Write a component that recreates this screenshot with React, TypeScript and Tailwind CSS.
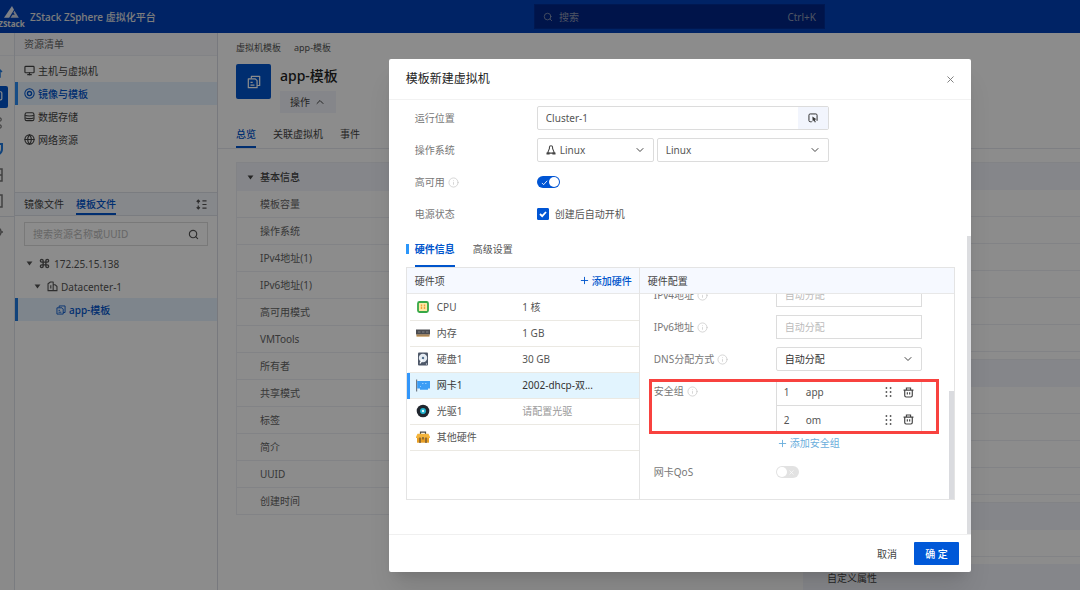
import React from 'react';
import { ChevronDown, ChevronUp, Command, Globe, Info, Monitor, Plus, Search, X } from 'lucide-react';

const CopyIcon = ({ className = '' }: { className?: string }) => (
    <svg viewBox="0 0 16 16" fill="none" stroke="currentColor" strokeWidth="1.4" strokeLinejoin="round" className={className}>
        <path d="M5 4V1.500h9.500V12H11.500" />
        <path d="M1.500 4.500h8l2 2v8h-10Z" />
        <path d="M4 8.500h2.500M4 11.500h4.500" />
    </svg>
);

const DiscIcon = () => (
    <svg viewBox="0 0 16 16" fill="none" stroke="currentColor" className="w-[11px] h-[11px]">
        <circle cx="8" cy="8" r="6.800" strokeWidth="1.500" />
        <circle cx="8" cy="8" r="3" strokeWidth="2" />
    </svg>
);

const StorageIcon = () => (
    <svg viewBox="0 0 16 16" fill="none" stroke="currentColor" strokeWidth="1.600" className="w-[11px] h-[11px]">
        <rect x="1.500" y="2.500" width="13" height="11.500" rx="2.500" />
        <path d="M1.500 6c2 1.600 11 1.600 13 0M2 10c2 1.500 10 1.500 12 0" />
    </svg>
);

const BuildingIcon = () => (
    <svg viewBox="0 0 16 16" fill="none" stroke="currentColor" strokeWidth="1.600" strokeLinejoin="round" className="w-[11px] h-[11px]">
        <path d="M1.500 14V4L5 1.500h4V14ZM9 5.500h3l2.500 2.500v6H9M5.500 6v5" />
    </svg>
);

const CaretIcon = () => (
    <svg viewBox="0 0 8 6" fill="currentColor" className="w-[7px] h-[5px] shrink-0">
        <path d="M.5.5h7L4 5.500Z" />
    </svg>
);

const SortIcon = () => (
    <svg viewBox="0 0 12 12" fill="none" stroke="currentColor" strokeWidth="1.300" className="w-[11px] h-[11px]">
        <path d="M7 2h4.500M7 6h4.500M7 10h4.500M2.500 1v4M.8 3l1.700-1.800L4.200 3M2.500 7v4M.8 9l1.700 1.800L4.200 9" />
    </svg>
);

const TuxIcon = () => (
    <svg viewBox="0 0 16 16" fill="none" stroke="currentColor" strokeWidth="1.700" className="w-[10px] h-[10px]">
        <path d="M5.500 5.500V3.500a2.500 2.300 0 0 1 5 0v2l3 7.500h-11Z" />
        <path d="M.8 13.500h5M10.200 13.500h5" strokeWidth="3" />
    </svg>
);

const PickIcon = () => (
    <svg viewBox="0 0 16 16" fill="none" stroke="currentColor" strokeWidth="1.600" className="w-[10px] h-[10px]">
        <path d="M6 14H3.500a2 2 0 0 1-2-2V3.500a2 2 0 0 1 2-2h9a2 2 0 0 1 2 2v9" />
        <path d="M7 5.500l6.500 4.500-2.700.8 1.700 3.400-1.500.8-1.700-3.400L7.500 14Z" fill="currentColor" stroke="none" />
    </svg>
);

const TrashIcon = () => (
    <svg viewBox="0 0 16 16" fill="none" stroke="currentColor" strokeWidth="1.700" className="w-[11px] h-[11px]">
        <path d="M.8 4.500h14.400M5 4V1.500h6V4M2.500 4.500v8a2 2 0 0 0 2 2h7a2 2 0 0 0 2-2v-8M6.300 7.500v3.500M9.700 7.500v3.500" />
    </svg>
);

const DragIcon = () => (
    <svg viewBox="0 0 8 12" fill="currentColor" className="w-[7px] h-[10px]">
        {[1.2, 6, 10.8].map((y) => (
            <g key={y}>
                <circle cx="1.500" cy={y} r="1.100" />
                <circle cx="6.500" cy={y} r="1.100" />
            </g>
        ))}
    </svg>
);

const CpuIcon = () => (
    <svg viewBox="0 0 14 14" className="w-[14px] h-[14px]">
        <rect x="2" y="2" width="10" height="10" rx="1.500" fill="#fde9a8" stroke="#37a847" strokeWidth="1.800" />
        <path d="M5.500 4.500v5M8.500 4.500v5" stroke="#f0a43c" strokeWidth="1.400" strokeDasharray="2 .6" />
    </svg>
);

const MemoryIcon = () => (
    <svg viewBox="0 0 14 14" className="w-[14px] h-[14px]">
        <path d="M0 3.500h14v5H0Z" fill="#4b4c50" />
        <path d="M2 5h2.500v2H2ZM6 5h2.500v2H6ZM10 5h2.500v2H10Z" fill="#66676b" />
        <path d="M.5 8.500h13v2.300H.5Z" fill="#c9a26b" />
        <path d="M.5 9h13" stroke="#77583a" strokeWidth=".8" />
    </svg>
);

const DiskIcon = () => (
    <svg viewBox="0 0 14 14" className="w-[14px] h-[14px]">
        <rect x="2" y=".5" width="10" height="13" rx="1" fill="#4d5768" />
        <circle cx="7" cy="6" r="4.200" fill="#e4ebf2" />
        <circle cx="7" cy="6" r="1.200" fill="#55718f" />
        <path d="M4 11.500l2.500-4" stroke="#fff" strokeWidth="1.400" />
        <circle cx="10.500" cy="12" r=".7" fill="#cfd6dd" />
    </svg>
);

const NicIcon = () => (
    <svg viewBox="0 0 14 14" className="w-[14px] h-[14px]">
        <path d="M.6 1.500v12" stroke="#707b88" strokeWidth="1.200" />
        <path d="M1.200 3h12.800v7.500H12v1.200H4v-1.200H1.200Z" fill="#3b9df5" />
        <path d="M6 5.500h1.500M9 5.500h1.500M4 8.500h1" stroke="#8fcbff" strokeWidth="1" />
    </svg>
);

const OpticalIcon = () => (
    <svg viewBox="0 0 14 14" className="w-[14px] h-[14px]">
        <circle cx="7" cy="7" r="6.300" fill="#20262e" />
        <circle cx="7" cy="7" r="3" fill="#1fb2cf" />
        <circle cx="7" cy="7" r="1.200" fill="#e8fbff" />
    </svg>
);

const ToolboxIcon = () => (
    <svg viewBox="0 0 14 14" className="w-[14px] h-[14px]">
        <path d="M4.500 4V2.200h5V4" fill="none" stroke="#4e4a45" strokeWidth="1.200" />
        <path d="M1.500 3.800h11L14 7v1H0V7Z" fill="#f4b43b" />
        <path d="M1 8h12v4.700H1Z" fill="#e89f25" />
        <path d="M4 7.500v5.500M10 7.500v5.500M7 7v2.500" stroke="#5a4a36" strokeWidth="1.200" />
    </svg>
);

const LogoIcon = () => (
    <svg viewBox="0 0 18 16" className="w-[17px] h-[15px]">
        <path d="M1 13.500L9.500 1l2.200 4-5.200 8.500Z" fill="#e8ecf5" />
        <path d="M12.200 6l4.600 7.500H8l2-3.200h2.500l-1.500-2.400Z" fill="#cfd6e6" />
    </svg>
);

const navItems = [
    { label: '主机与虚拟机', icon: <Monitor size={11} strokeWidth={2.5} /> },
    { label: '镜像与模板', icon: <DiscIcon />, active: true },
    { label: '数据存储', icon: <StorageIcon /> },
    { label: '网络资源', icon: <Globe size={11} strokeWidth={2.5} /> },
];

const infoRows = ['模板容量', '操作系统', 'IPv4地址(1)', 'IPv6地址(1)', '高可用模式', 'VMTools', '所有者', '共享模式', '标签', '简介', 'UUID', '创建时间'];

const hardware = [
    { name: 'CPU', value: '1 核', icon: <CpuIcon /> },
    { name: '内存', value: '1 GB', icon: <MemoryIcon /> },
    { name: '硬盘1', value: '30 GB', icon: <DiskIcon /> },
    { name: '网卡1', value: '2002-dhcp-双...', icon: <NicIcon />, active: true },
    { name: '光驱1', value: '请配置光驱', icon: <OpticalIcon />, muted: true },
    { name: '其他硬件', value: '', icon: <ToolboxIcon /> },
];

const Hint = () => <Info size={11} strokeWidth={1.5} className="text-[#c4c4c4]" />;

const SelectBox = ({ id, label, value, icon, className = '' }: { id: string; label: string; value: string; icon?: React.ReactNode; className?: string }) => (
    <div className={`relative flex items-center h-6 border border-[#dcdcdc] rounded-xs ${className}`}>
        {icon && <span className="pl-2 text-[#444]">{icon}</span>}
        <select id={id} aria-label={label} className={`appearance-none bg-transparent h-full w-full outline-none ${icon ? 'pl-1' : 'pl-2'}`}>
            <option>{value}</option>
        </select>
        <ChevronDown size={12} className="absolute right-[7px] pointer-events-none text-[#444]" />
    </div>
);

const BlankCard = ({ rows }: { rows: number }) => (
    <div className="border-t border-l border-[#edeff4]">
        <div className="h-[27px] bg-[#f3f5fb]"></div>
        {Array.from({ length: rows }).map((_, idx) => (
            <div key={idx} className="h-[27px] border-b border-[#edeff4]"></div>
        ))}
    </div>
);

function TopBar() {
    return (
        <header className="flex items-center h-[33px] shrink-0 bg-[#0041b8] text-[#e4e4e4] overflow-hidden">
            <div className="w-[30px] shrink-0 flex flex-col items-center pr-[7px]">
                <LogoIcon />
                <span className="text-[8px] leading-[8px] font-bold">ZStack</span>
            </div>
            <span className="w-[504px] shrink-0 font-medium">ZStack ZSphere 虚拟化平台</span>
            <label className="flex items-center w-[291px] h-[25px] px-2 bg-[#002587] border border-[#002c94]">
                <Search size={10} className="text-[#8f9ab5]" />
                <input aria-label="搜索" placeholder="搜索" className="flex-1 min-w-0 pl-[6px] bg-transparent outline-none placeholder:text-[#8f9ab5]" />
                <kbd className="font-[inherit] text-[#8f9ab5]">Ctrl+K</kbd>
            </label>
        </header>
    );
}

function Rail() {
    const railIcon = 'flex justify-end h-[14px] shrink-0';
    return (
        <nav className="w-[15px] shrink-0 overflow-hidden border-r border-[#dfe2ea] bg-[#fbfbfc] text-[#777]">
            <div className="h-[23px] border-b border-[#edeff4]"></div>
            <div className="flex flex-col gap-3 pt-2 pr-[11px]">
                <div className={`${railIcon} text-[#1f7ae0]`}><svg viewBox="0 0 14 14" fill="none" stroke="currentColor" strokeWidth="1.500" className="w-[14px] shrink-0"><path d="M1 8l6-6 6 6M11 7v6H3V7" /></svg></div>
                <div className="flex justify-end items-center h-[22px] -my-1 -mr-[5px] pr-[5px] bg-[#0055cc] text-white rounded-r-xs"><Monitor size={14} className="shrink-0" /></div>
                <div className={railIcon}><Command size={14} className="shrink-0" /></div>
                <div className={`${railIcon} text-[#1f7ae0]`}><svg viewBox="0 0 14 14" fill="none" stroke="currentColor" strokeWidth="2" className="w-[14px] shrink-0"><path d="M2 2h11v5c0 3-2 5-5 6-4-1-6-3-6-6Z" /></svg></div>
                <div className={railIcon}><svg viewBox="0 0 14 14" fill="none" stroke="currentColor" strokeWidth="1.500" className="w-[14px] shrink-0"><path d="M1 1h12v12H1ZM1 7h12" /></svg></div>
                <div className={railIcon}><svg viewBox="0 0 14 14" fill="none" stroke="currentColor" strokeWidth="1.500" className="w-[14px] shrink-0"><path d="M1 1h12v12H1Z" /></svg></div>
            </div>
            <div className="border-t border-[#dfe2ea] mt-2 pt-2 pr-[11px]">
                <div className={railIcon}><svg viewBox="0 0 14 14" fill="none" stroke="currentColor" strokeWidth="1.500" className="w-[14px] shrink-0"><circle cx="7" cy="7" r="5" /><circle cx="7" cy="7" r="1.500" /><path d="M12 7h2" /></svg></div>
            </div>
        </nav>
    );
}

function Sidebar() {
    return (
        <aside className="w-[203px] shrink-0 flex flex-col border-r border-[#dadde5]">
            <h2 className="h-[23px] flex items-center pl-[9px] bg-[#f7f8fc] border-b border-[#edeff4] text-[#666]">资源清单</h2>
            <ul className="h-[136px] pt-[3px]">
                {navItems.map((item) => (
                    <li key={item.label}>
                        <a href="#" className={`flex items-center gap-[3px] h-[23px] border-l-3 pl-[6px] ${item.active ? 'bg-[#e6f2ff] border-[#2b8cf5] text-[#0055cc] font-medium' : 'border-transparent text-[#444]'}`}>
                            {item.icon}
                            {item.label}
                        </a>
                    </li>
                ))}
            </ul>
            <div className="flex h-[24px] border-y border-[#dfe2ea] bg-[#f5f7fd] pl-[9px] pr-[10px] gap-3 items-stretch">
                <button className="text-[#444]">镜像文件</button>
                <button className="text-[#0055cc] font-medium border-b-2 border-[#0055cc] pt-[2px]">模板文件</button>
                <button aria-label="排序" className="ml-auto text-[#555]"><SortIcon /></button>
            </div>
            <label className="mt-[6px] mx-[9px] h-6 border border-[#dcdcdc] flex items-center px-2">
                <input aria-label="搜索资源" placeholder="搜索资源名称或UUID" className="flex-1 min-w-0 outline-none bg-transparent placeholder:text-[#bbb]" />
                <Search size={11} strokeWidth={2.5} className="text-[#555]" />
            </label>
            <ul className="mt-[6px] text-[#555]">
                <li className="flex items-center h-[23px] pl-[11px] gap-[6px]">
                    <CaretIcon /><span className="flex items-center gap-1"><Command size={11} strokeWidth={3} />172.25.15.138</span>
                </li>
                <li className="flex items-center h-[23px] pl-[19px] gap-[6px]">
                    <CaretIcon /><span className="flex items-center gap-[3px]"><BuildingIcon />Datacenter-1</span>
                </li>
                <li className="flex items-center h-[23px] pl-[38px] gap-[3px] border-l-3 border-[#1f7ae0] bg-[#e6f2ff] text-[#0055cc] font-medium">
                    <CopyIcon className="w-[10px] h-[10px]" />app-模板
                </li>
            </ul>
        </aside>
    );
}

function Overview() {
    return (
        <main className="flex-1 min-w-0 pl-[18px] text-[#555]">
            <div className="flex gap-[13px] pt-[8px] h-[31px] text-[9px] leading-[14px]">
                <a href="#">虚拟机模板</a>
                <span>app-模板</span>
            </div>
            <div className="flex gap-[9px] h-[58px]">
                <div className="w-[35px] h-[35px] rounded-xs bg-[#0055cc] text-white flex items-center justify-center"><CopyIcon className="w-[14px] h-[14px]" /></div>
                <div className="flex flex-col items-start">
                    <h1 className="text-[14px] leading-[24px] font-medium text-[#222]">app-模板</h1>
                    <button className="mt-[3px] h-[22px] px-[10px] flex items-center gap-1 bg-[#f3f5fb] text-[#444]">操作 <ChevronUp size={12} /></button>
                </div>
            </div>
            <div className="flex gap-[17px] h-[27px] border-b border-[#e6e8ee] -ml-[18px] pl-[18px] text-[#444]">
                <button className="text-[#0055cc] font-medium border-b-2 border-[#0055cc]">总览</button>
                <button className="pb-[2px]">关联虚拟机</button>
                <button className="pb-[2px]">事件</button>
            </div>
            <div className="grid grid-cols-[1fr_277px] gap-[6px] mt-[13px] items-start">
                <section className="border-l border-t border-[#edeff4]">
                    <h2 className="flex items-center gap-[6px] h-7 pl-[10px] bg-[#f3f5fb] font-medium text-[#444]"><CaretIcon />基本信息</h2>
                    {infoRows.map((row) => (
                        <div key={row} className="flex items-center h-[27px] pl-[23px] border-b border-[#edeff4] text-[#666]">{row}</div>
                    ))}
                </section>
                <div className="flex flex-col gap-[7px]">
                    <BlankCard rows={6} />
                    <BlankCard rows={4} />
                    <BlankCard rows={1} />
                    <h2 className="flex items-center h-[27px] pl-6 bg-[#f3f5fb] text-[#444]">自定义属性</h2>
                </div>
            </div>
        </main>
    );
}

function HardwareTable() {
    return (
        <div className="w-[233px] shrink-0 border-r border-[#e4e4e4]">
            <div className="flex items-center justify-between h-[26px] pl-2 pr-[7px] bg-[#f6f9ff] border-b border-[#e8e8e8]">
                <span className="text-[#444]">硬件项</span>
                <button className="flex items-center gap-[2px] text-[#0055cc] font-medium"><Plus size={11} />添加硬件</button>
            </div>
            <table className="w-full table-fixed text-left">
                <tbody>
                    {hardware.map((item) => (
                        <tr key={item.name} className={`h-[26px] border-b border-[#ebe9e3] ${item.active ? 'bg-[#e2f4fe]' : ''}`}>
                            <th scope="row" className={`w-[112px] font-normal border-l-3 p-0 pl-[6px] ${item.active ? 'border-l-[#3296fa] text-[#333]' : 'border-l-transparent'}`}>
                                <span className="flex items-center gap-[7px]">{item.icon}{item.name}</span>
                            </th>
                            <td className={`p-0 pl-[2px] ${item.muted ? 'text-[#999]' : item.active ? 'text-[#333]' : ''}`}>{item.value}</td>
                        </tr>
                    ))}
                </tbody>
            </table>
        </div>
    );
}

function NicConfig() {
    const label = 'w-[122px] shrink-0 flex items-center gap-[3px] h-6 text-[#777]';
    const field = 'w-[146px] h-6 px-2 border border-[#dcdcdc] outline-none placeholder:text-[#bbb]';
    return (
        <div className="flex-1 min-w-0 flex flex-col">
            <div className="flex items-center h-[26px] px-2 bg-[#f6f9ff] border-b border-[#e8e8e8] text-[#444]">硬件配置</div>
            <div className="flex flex-1 min-h-0 overflow-hidden">
                <div className="flex flex-col gap-2 -mt-[11px] pl-[14px] flex-1 min-w-0">
                    <div className="flex">
                        <label htmlFor="ipv4" className={label}>IPv4地址 <Hint /></label>
                        <input id="ipv4" placeholder="自动分配" className={field} />
                    </div>
                    <div className="flex">
                        <label htmlFor="ipv6" className={label}>IPv6地址 <Hint /></label>
                        <input id="ipv6" placeholder="自动分配" className={field} />
                    </div>
                    <div className="flex">
                        <label htmlFor="dns" className={label}>DNS分配方式 <Hint /></label>
                        <SelectBox id="dns" label="DNS分配方式" value="自动分配" className="w-[146px] text-[#333]" />
                    </div>
                    <div className="relative flex">
                        <span className={label}>安全组 <Hint /></span>
                        <ul className="w-[146px] border-x border-[#dcdcdc] divide-y divide-[#dcdcdc]">
                            {['app', 'om'].map((name, idx) => (
                                <li key={name} className="flex items-center h-[27px] px-[7px]">
                                    <span className="w-[22px]">{idx + 1}</span>
                                    <span className="flex-1">{name}</span>
                                    <button aria-label="拖动排序" className="text-[#555]"><DragIcon /></button>
                                    <button aria-label="删除" className="ml-[11px] text-[#444]"><TrashIcon /></button>
                                </li>
                            ))}
                        </ul>
                        <div className="absolute -left-[5px] right-[10px] top-0 -bottom-[1px] border-3 border-[#f8423f] pointer-events-none"></div>
                    </div>
                    <button className="flex items-center gap-[2px] ml-[123px] -mt-2 h-5 text-[#6aaedc]"><Plus size={11} />添加安全组</button>
                    <div className="flex items-center -mt-[1px]">
                        <span className={label}>网卡QoS</span>
                        <button role="switch" aria-checked="false" aria-label="网卡QoS" className="flex items-center justify-between w-[23px] h-3 p-[1px] pr-1 rounded-full bg-[#e2e2e2]">
                            <span className="w-[10px] h-[10px] rounded-full bg-white"></span>
                            <X size={7} className="text-white" />
                        </button>
                    </div>
                </div>
                <div className="w-[5px] shrink-0 flex flex-col justify-end"><div className="h-[108px] bg-[#dadbdf]"></div></div>
            </div>
        </div>
    );
}

function CreateVmDialog() {
    const label = 'w-[122px] shrink-0 flex items-center gap-[3px] text-[#777]';
    return (
        <div role="dialog" aria-label="模板新建虚拟机" className="w-full bg-white rounded-xs shadow-xl text-[#555]">
            <div className="flex items-center justify-between h-[41px] pl-[17px] pr-[15px] border-b border-[#f2f2f2]">
                <h2 className="text-[12px] font-normal text-[#222]">模板新建虚拟机</h2>
                <button aria-label="关闭" className="text-[#777]"><X size={11} /></button>
            </div>
            <div className="flex h-[434px]">
                <div className="flex-1 min-w-0 pl-[17px] pr-3 pt-[6px]">
                    <div className="flex flex-col gap-2 pl-[9px]">
                        <div className="flex items-center h-6">
                            <label htmlFor="location" className={label}>运行位置</label>
                            <div className="flex w-[292px] h-6 border border-[#dcdcdc] rounded-xs">
                                <input id="location" defaultValue="Cluster-1" className="flex-1 min-w-0 pl-2 outline-none" />
                                <button aria-label="选择位置" className="w-[30px] bg-[#f2f5fd] flex items-center justify-center text-[#333]"><PickIcon /></button>
                            </div>
                        </div>
                        <div className="flex items-center h-6">
                            <label htmlFor="os" className={label}>操作系统</label>
                            <div className="flex gap-[3px] w-[292px]">
                                <SelectBox id="os" label="操作系统" value="Linux" icon={<TuxIcon />} className="w-[117px]" />
                                <SelectBox id="distro" label="系统版本" value="Linux" className="flex-1" />
                            </div>
                        </div>
                        <div className="flex items-center h-6">
                            <span className={label}>高可用 <Hint /></span>
                            <button role="switch" aria-checked="true" aria-label="高可用" className="flex items-center justify-between w-[23px] h-3 p-[1px] pl-1 rounded-full bg-[#0055d4]">
                                <svg viewBox="0 0 8 8" fill="none" stroke="#fff" className="w-[7px] h-[7px]"><path d="M1 4.500L3 6.500 7 2" /></svg>
                                <span className="w-[10px] h-[10px] rounded-full bg-white"></span>
                            </button>
                        </div>
                        <div className="flex items-center h-6">
                            <span className={label}>电源状态</span>
                            <label className="flex items-center gap-[6px]">
                                <span className="relative flex">
                                    <input type="checkbox" defaultChecked className="appearance-none w-3 h-3 rounded-[1px] border border-[#0055d4] checked:bg-[#0055d4]" />
                                    <svg viewBox="0 0 12 12" fill="none" stroke="#fff" strokeWidth="1.800" className="absolute inset-0 pointer-events-none"><path d="M3 6l2.200 2.200L9 4" /></svg>
                                </span>
                                创建后自动开机
                            </label>
                        </div>
                    </div>
                    <div className="flex items-stretch h-[35px] mt-[6px]">
                        <span className="w-[3px] h-[10px] mt-[12px] mr-[6px] bg-[#2b96fa]"></span>
                        <button className="text-[#0055cc] font-bold border-b-2 border-[#0055cc]">硬件信息</button>
                        <button className="ml-[18px] pb-[2px]">高级设置</button>
                    </div>
                    <div className="flex h-[233px] border border-[#e4e4e4]">
                        <HardwareTable />
                        <NicConfig />
                    </div>
                </div>
                <div className="w-1 shrink-0 flex flex-col justify-end"><div className="h-[298px] bg-[#dcdde0]"></div></div>
            </div>
            <div className="flex items-center justify-end gap-[17px] h-[38px] pr-3 border-t border-[#f0f0f0]">
                <button className="text-[#444]">取消</button>
                <button className="w-[45px] h-[23px] rounded-[1px] bg-[#0058d8] text-white font-medium">确 定</button>
            </div>
        </div>
    );
}

export default function App() {
    return (
        <div className="relative h-screen overflow-hidden flex flex-col bg-white text-[10px] leading-[16px] font-['Noto_Sans','Noto_Sans_CJK_SC',sans-serif]">
            <TopBar />
            <div className="flex flex-1 min-h-0">
                <Rail />
                <Sidebar />
                <Overview />
            </div>
            <div className="absolute inset-0 bg-black/45 pl-[36%] pr-[109px] pt-[59px]">
                <CreateVmDialog />
            </div>
        </div>
    );
}
